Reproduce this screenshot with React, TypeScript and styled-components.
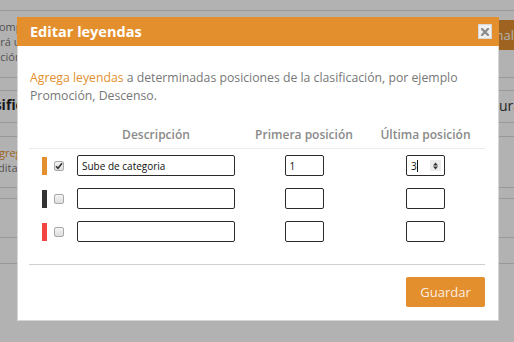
import React from 'react';
import styled, { createGlobalStyle } from 'styled-components';

const ORANGE = '#e38f2e';

const Global = createGlobalStyle`
  html, body { margin: 0; padding: 0; width: 514px; height: 342px; overflow: hidden; background: #fff; }
  body { font-family: "Open Sans", "Liberation Sans", sans-serif; }
  * { box-sizing: border-box; }
`;

const Stage = styled.div`
  position: relative;
  width: 514px;
  height: 342px;
  overflow: hidden;
  background: #fff;
`;

/* ---------- page behind the dialog ---------- */
const BgPage = styled.div`
  margin-left: -8px;
  width: 556px;
  display: flex;
  flex-direction: column;
  color: #333;
`;

const BgTop = styled.div`
  height: 11px;
  border-bottom: 1px solid #dadada;
`;

const BgSection = styled.div<{ $mt: number; $h: number; $bottom?: boolean }>`
  margin-top: ${(p) => p.$mt}px;
  height: ${(p) => p.$h}px;
  border-top: ${(p) => (p.$mt > 0 ? '1px solid #dadada' : 'none')};
  border-bottom: ${(p) => (p.$bottom ? '1px solid #dadada' : 'none')};
  display: flex;
  justify-content: space-between;
  align-items: flex-start;
`;

const BgText = styled.div<{ $pt: number }>`
  padding-top: ${(p) => p.$pt}px;
  font-size: 11px;
  line-height: 15px;
  color: #777;
`;

const BgLine = styled.div<{ $shift?: number }>`
  margin-left: ${(p) => p.$shift ?? 0}px;
  white-space: nowrap;
`;

const BgLink = styled.span`
  color: ${ORANGE};
`;

const BgButton = styled.div`
  margin-top: 9px;
  height: 30px;
  padding: 0 12px;
  background: ${ORANGE};
  color: #fff;
  font-size: 13px;
  line-height: 30px;
`;

const BgHeading = styled.div`
  margin-left: -19px;
  padding-top: 4px;
  font-size: 14px;
  line-height: 20px;
  font-weight: 700;
  color: #222;
`;

const BgRight = styled.div`
  padding-top: 5px;
  padding-right: 27px;
  font-size: 14px;
  line-height: 20px;
  color: #333;
`;

const Overlay = styled.div`
  position: absolute;
  inset: 0;
  background: rgba(0, 0, 0, 0.3);
`;

/* ---------- dialog ---------- */
const Modal = styled.div`
  position: absolute;
  top: 17px;
  left: 17px;
  width: 482px;
  background: #fff;
  border: 1px solid #d6d6d6;
  border-top: none;
  display: flex;
  flex-direction: column;
`;

const Header = styled.div`
  height: 29px;
  margin: 0 -1px;
  background: ${ORANGE};
  display: flex;
  align-items: center;
  justify-content: space-between;
  padding: 0 7px 0 13px;
`;

const Title = styled.h3`
  margin: 0;
  font-size: 14.5px;
  font-weight: 700;
  color: #fff;
  line-height: 20px;
`;

const CloseButton = styled.button`
  width: 14px;
  height: 15px;
  padding: 0;
  border: 1px solid #d9d9d9;
  background: #efefef;
  display: flex;
  align-items: center;
  justify-content: center;
  cursor: pointer;
`;

const Body = styled.div`
  padding: 0 13px 13px 11px;
  display: flex;
  flex-direction: column;
`;

const Intro = styled.p`
  margin: 23px 0 0;
  padding-left: 1px;
  font-size: 12.25px;
  line-height: 18px;
  color: #777;
`;

const Highlight = styled.span`
  color: ${ORANGE};
`;

const Grid = styled.div`
  margin-top: 22px;
  display: grid;
  grid-template-columns: 41px 172px 124px 119px;
`;

const HeadCell = styled.div`
  font-size: 12px;
  font-weight: 600;
  color: #8a8a8a;
  text-align: center;
  line-height: 16px;
  padding-bottom: 5px;
  border-bottom: 1px solid #ececec;
`;

const Cell = styled.div<{ $start?: boolean }>`
  height: 33px;
  display: flex;
  align-items: center;
  justify-content: ${(p) => (p.$start ? 'flex-start' : 'center')};
  padding-left: ${(p) => (p.$start ? '13px' : '0')};
  gap: 7px;
`;

const ColorBar = styled.span<{ $color: string }>`
  width: 5px;
  height: 18px;
  background: ${(p) => p.$color};
`;

const Check = styled.span`
  width: 10px;
  height: 10px;
  margin-top: 1px;
  border: 1px solid #a9a9a9;
  border-radius: 2px;
  background: linear-gradient(#f4f4f4, #dedede);
  display: flex;
  align-items: center;
  justify-content: center;
`;

const TextInput = styled.input<{ $w: number }>`
  width: ${(p) => p.$w}px;
  height: 21px;
  border: 1px solid #2b2b2b;
  border-radius: 2px;
  padding: 0 4px;
  font-family: "Open Sans", "Liberation Sans", sans-serif;
  font-size: 10px;
  color: #111;
  background: #fff;
  outline: none;
`;

const FocusField = styled.div<{ $w: number }>`
  width: ${(p) => p.$w}px;
  height: 21px;
  border: 1px solid #2b2b2b;
  border-radius: 2px;
  padding: 0 3px 0 4px;
  display: flex;
  align-items: center;
  font-family: "Open Sans", "Liberation Sans", sans-serif;
  font-size: 10px;
  color: #111;
`;

const Caret = styled.span`
  width: 1px;
  height: 12px;
  background: #111;
`;

const Spinner = styled.span`
  margin-left: auto;
  width: 11px;
  height: 11px;
  background: #ececec;
  display: flex;
  align-items: center;
  justify-content: center;
`;

const Divider = styled.div`
  margin-top: 16px;
  height: 1px;
  background: #cfcfcf;
`;

const Actions = styled.div`
  margin-top: 12px;
  display: flex;
  justify-content: flex-end;
`;

const SaveButton = styled.button`
  width: 79px;
  height: 30px;
  border: none;
  border-radius: 2px;
  background: ${ORANGE};
  color: #fbeee0;
  font-family: "Open Sans", "Liberation Sans", sans-serif;
  font-size: 13px;
  cursor: pointer;
`;

type Row = { color: string; checked: boolean; desc: string; first: string; last: string };

const rows: Row[] = [
  { color: '#e38f2e', checked: true, desc: 'Sube de categoria', first: '1', last: '3' },
  { color: '#333333', checked: false, desc: '', first: '', last: '' },
  { color: '#f44545', checked: false, desc: '', first: '', last: '' },
];

export default function App() {
  return (
    <Stage>
      <Global />
      <BgPage>
        <BgTop />
        <BgSection $mt={0} $h={67} $bottom>
          <BgText $pt={8}>
            <BgLine>Compartir clasificación</BgLine>
            <BgLine $shift={-4}>Será un enlace público</BgLine>
            <BgLine $shift={-4}>Acción disponible</BgLine>
          </BgText>
          <BgButton>Personalizar</BgButton>
        </BgSection>
        <BgSection $mt={12} $h={33} $bottom>
          <BgHeading>Clasificación</BgHeading>
          <BgRight>Estructura</BgRight>
        </BgSection>
        <BgSection $mt={13} $h={52} $bottom>
          <BgText $pt={8}>
            <BgLine>
              <BgLink>Agregar leyendas</BgLink>
            </BgLine>
            <BgLine>Editar</BgLine>
          </BgText>
        </BgSection>
        <BgSection $mt={10} $h={40} $bottom />
        <BgSection $mt={25} $h={40} />
      </BgPage>

      <Overlay />

      <Modal>
        <Header>
          <Title>Editar leyendas</Title>
          <CloseButton aria-label="Cerrar">
            <svg width="8" height="8" viewBox="0 0 8 8">
              <path d="M1 1 L7 7 M7 1 L1 7" stroke="#8a8a8a" strokeWidth="2.2" strokeLinecap="square" />
            </svg>
          </CloseButton>
        </Header>
        <Body>
          <Intro>
            <Highlight>Agrega leyendas</Highlight> a determinadas posiciones de la clasificación, por ejemplo
            Promoción, Descenso.
          </Intro>
          <Grid>
            <HeadCell />
            <HeadCell>Descripción</HeadCell>
            <HeadCell>Primera posición</HeadCell>
            <HeadCell>Última posición</HeadCell>
            {rows.map((r, i) => (
              <React.Fragment key={i}>
                <Cell $start>
                  <ColorBar $color={r.color} />
                  <Check>
                    {r.checked && (
                      <svg width="8" height="8" viewBox="0 0 8 8">
                        <path d="M1 4.2 L3 6.3 L7 1.3" stroke="#333" strokeWidth="1.6" fill="none" />
                      </svg>
                    )}
                  </Check>
                </Cell>
                <Cell>
                  <TextInput $w={158} readOnly value={r.desc} />
                </Cell>
                <Cell>
                  <TextInput $w={39} readOnly value={r.first} />
                </Cell>
                <Cell>
                  {i === 0 ? (
                    <FocusField $w={39}>
                      {r.last}
                      <Caret />
                      <Spinner>
                        <svg width="7" height="8" viewBox="0 0 7 8">
                          <path d="M3.5 0.5 L6 3.6 L1 3.6 Z M3.5 7.5 L6 4.4 L1 4.4 Z" fill="#333" />
                        </svg>
                      </Spinner>
                    </FocusField>
                  ) : (
                    <TextInput $w={39} readOnly value={r.last} />
                  )}
                </Cell>
              </React.Fragment>
            ))}
          </Grid>
          <Divider />
          <Actions>
            <SaveButton>Guardar</SaveButton>
          </Actions>
        </Body>
      </Modal>
    </Stage>
  );
}
